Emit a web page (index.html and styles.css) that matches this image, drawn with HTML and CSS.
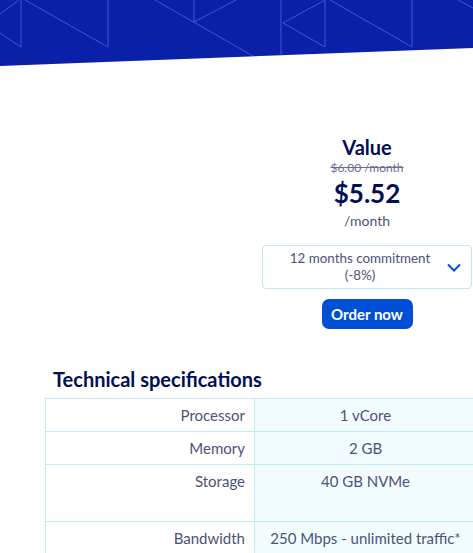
FILE: index.html
```html
<!DOCTYPE html>
<html lang="en">
<head>
<meta charset="utf-8">
<link rel="stylesheet" href="styles.css">
</head>
<body>
<header class="banner">
  <svg class="pattern" width="473" height="70" viewBox="0 0 473 70" xmlns="http://www.w3.org/2000/svg">
    <g fill="none" stroke="#3d57d0" stroke-width="1">
      <path d="M0 14 L19 0"/>
      <path d="M0 33 L21 47 L21 0"/>
      <path d="M25 0 L108 47 L108 0"/>
      <path d="M155 0 L253 56"/>
      <path d="M194 0 L194 22 L236 0"/>
      <path d="M281 0 L281 56"/>
      <path d="M325 0 L283 23 L325 47 L325 0"/>
      <path d="M330 0 L412 47 L412 0"/>
      <path d="M458 0 L473 8"/>
    </g>
  </svg>
</header>

<main class="page">
  <section class="offer">
    <h2 class="offer-name">Value</h2>
    <div class="old-price">$6.00 /month</div>
    <div class="price">$5.52</div>
    <div class="period">/month</div>
    <div class="select">
      <span class="select-text">12 months commitment<br>(-8%)</span>
      <svg class="chevron" width="14" height="9" viewBox="0 0 14 9" xmlns="http://www.w3.org/2000/svg"><path d="M1 1.5 L7 7.5 L13 1.5" fill="none" stroke="#0050d7" stroke-width="2"/></svg>
    </div>
    <button class="order">Order now</button>
  </section>

  <h3 class="specs-title">Technical specifications</h3>
  <table class="specs">
    <tr><th>Processor</th><td>1 vCore</td></tr>
    <tr><th>Memory</th><td>2 GB</td></tr>
    <tr class="tall"><th>Storage</th><td>40 GB NVMe</td></tr>
    <tr><th>Bandwidth</th><td>250 Mbps - unlimited traffic*</td></tr>
  </table>
</main>
</body>
</html>
```

FILE: styles.css
```css
html, body {
  margin: 0;
  padding: 0;
  background: #ffffff;
  overflow: hidden;
}
body {
  font-family: "Lato", "Open Sans", sans-serif;
  color: #4d5277;
  width: 473px;
  height: 553px;
}
.banner {
  height: 66px;
  background: #0a20a8;
  clip-path: polygon(0 0, 100% 0, 100% 48px, 0 66px);
  overflow: hidden;
}
.pattern {
  display: block;
}
.page {
  display: flex;
  flex-direction: column;
}
.offer {
  margin: 69px 1px 0 262px;
  width: 210px;
  display: flex;
  flex-direction: column;
  align-items: center;
  text-align: center;
}
.offer-name {
  margin: 0;
  font-size: 20px;
  line-height: 24px;
  font-weight: 700;
  color: #000e55;
}
.old-price {
  font-size: 12px;
  line-height: 17px;
  color: #6a6e8c;
  text-decoration: line-through;
}
.price {
  font-size: 26px;
  line-height: 35px;
  font-weight: 700;
  color: #000e55;
}
.period {
  font-size: 14px;
  line-height: 19px;
  color: #4d5277;
}
.select {
  margin-top: 15px;
  box-sizing: border-box;
  width: 210px;
  height: 44px;
  border: 1px solid #bde8f2;
  border-radius: 4px;
  display: flex;
  align-items: center;
  padding: 0 10px 0 18px;
}
.select-text {
  flex: 1;
  font-size: 13.4px;
  line-height: 17px;
  color: #4d5277;
  text-align: center;
}
.chevron {
  margin-left: 8px;
}
.order {
  margin-top: 10px;
  width: 91px;
  height: 30px;
  border: none;
  border-radius: 7px;
  background: #0050d7;
  color: #ffffff;
  font-family: inherit;
  font-size: 15px;
  font-weight: 700;
  padding: 0;
}
.specs-title {
  margin: 38px 0 0 53px;
  font-size: 20px;
  line-height: 24px;
  font-weight: 700;
  color: #000e55;
}
.specs {
  margin: 7px 0 0 45px;
  border-collapse: collapse;
  width: 432px;
  font-size: 15px;
}
.specs th, .specs td {
  border: 1px solid #c3ebf3;
  padding: 7px 9px;
  line-height: 18px;
  vertical-align: top;
}
.specs th {
  width: 190px;
  text-align: right;
  font-weight: 400;
  background: #ffffff;
}
.specs td {
  text-align: center;
  background: #f2fcfe;
}
.specs tr.tall th, .specs tr.tall td {
  height: 42px;
}
```
